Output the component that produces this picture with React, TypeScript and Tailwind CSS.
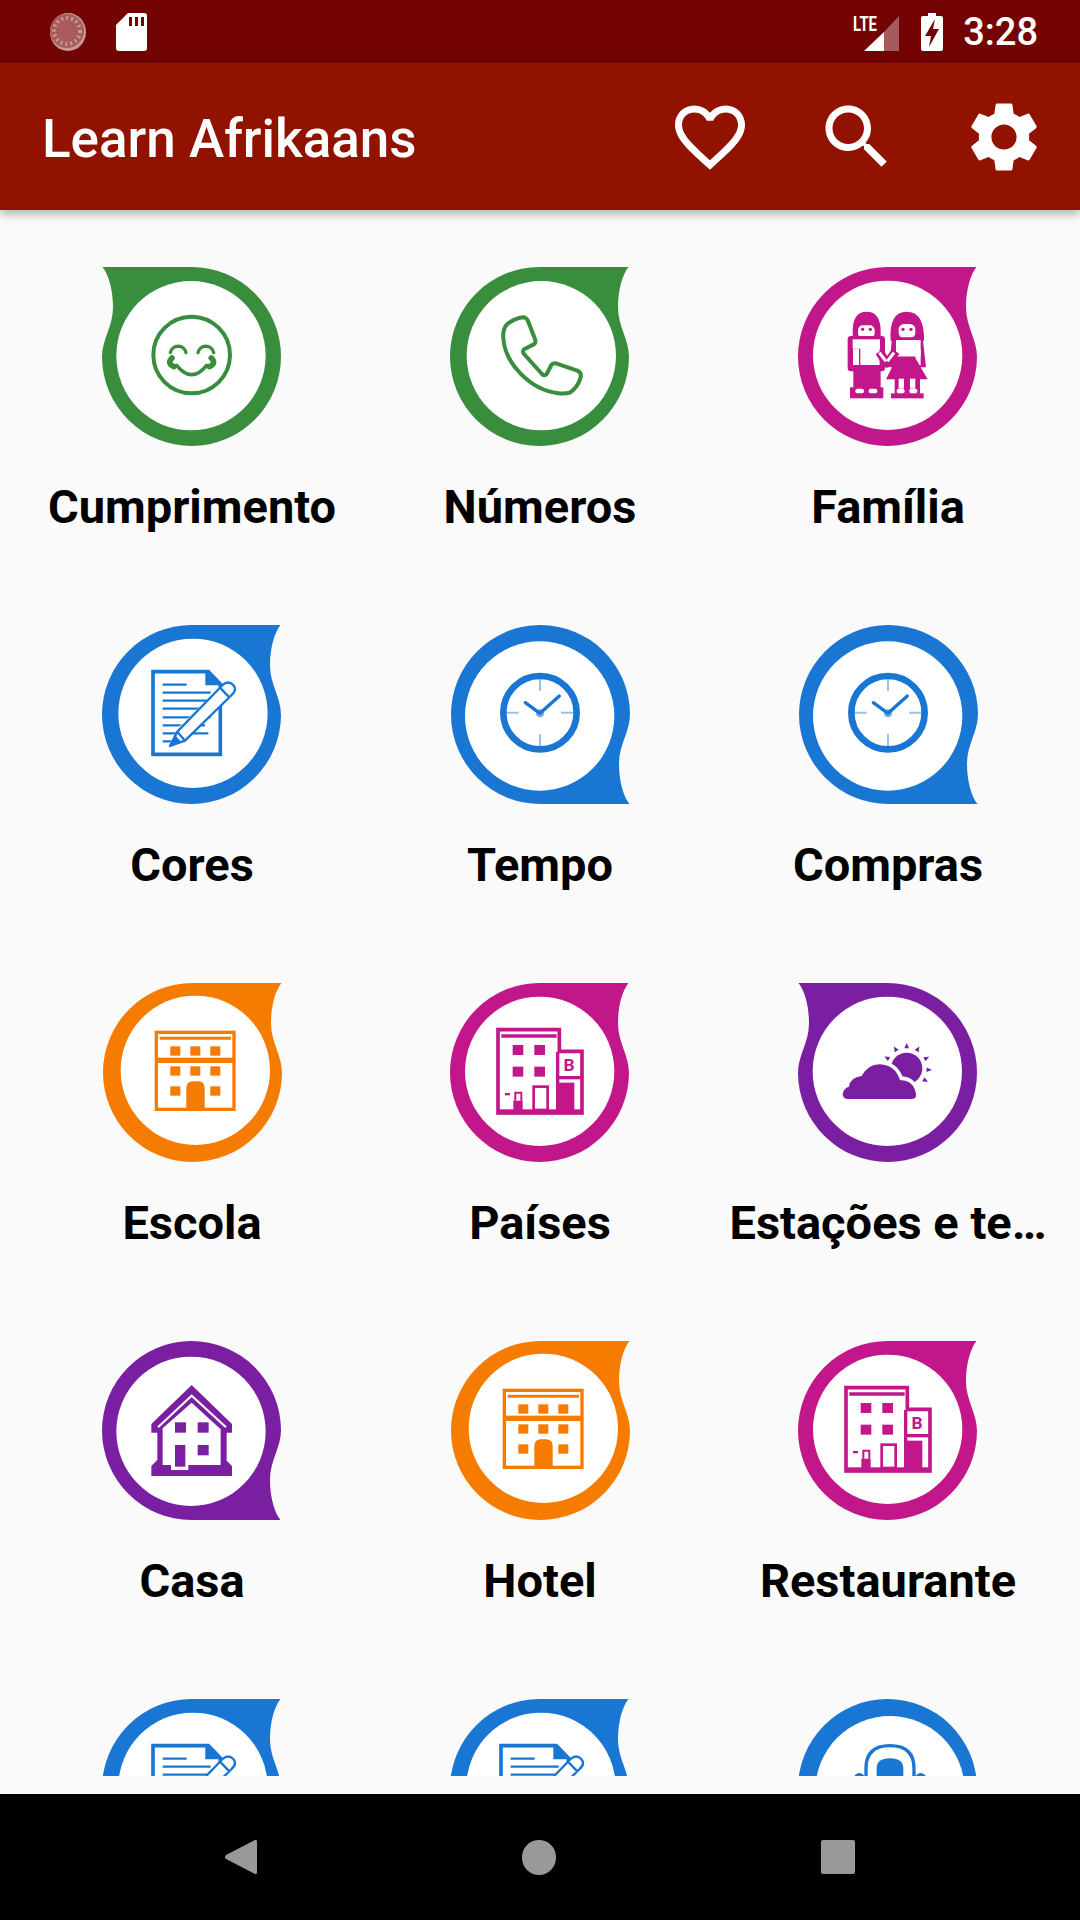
import React from 'react'

const GREEN = '#388e3c'
const BLUE = '#1976d2'
const PINK = '#c2178a'
const ORANGE = '#f57c00'
const PURPLE = '#7b1fa2'

type Corner = 'tl' | 'tr' | 'br'

interface Glyph {
  // offset of the drop's box and centre of the white disc, in 3x units
  ox: number
  oy: number
  cx: number
  cy: number
  draw: (c: string) => React.ReactNode
}

const smile: Glyph = {
  ox: 66,
  oy: 51,
  cx: 333,
  cy: 317,
  draw: c => (
    <g fill="none" stroke={c} strokeLinecap="round">
      <circle cx="335" cy="315" r="115" strokeWidth="12" />
      <path d="M271 308 A24 24 0 0 1 318 308 M354 308 A24 24 0 0 1 401 308" strokeWidth="10" />
      <path d="M290 346 Q335 402 380 346" strokeWidth="11" />
      <path d="M282 350 Q260 340 276 324 M388 350 Q410 340 394 324" strokeWidth="17" />
    </g>
  )
}

const phone: Glyph = {
  ox: 60,
  oy: 51,
  cx: 334,
  cy: 317,
  draw: c => (
    <path
      d="M232 222 Q255 205 278 202 Q290 202 295 215 L316 270 Q318 280 310 284 L282 298 Q276 304 282 312 L336 372 Q344 380 350 372 L364 345 Q368 338 378 340 L442 362 Q455 368 452 382 Q445 410 420 428 Q405 432 385 430 C300 420 225 340 220 265 Q218 235 232 222Z"
      fill="none"
      stroke={c}
      strokeWidth="12"
      strokeLinejoin="round"
    />
  )
}

const family: Glyph = {
  ox: 54,
  oy: 51,
  cx: 323,
  cy: 316,
  draw: c => (
    <g>
      {/* boy */}
      <path d="M218 250 Q216 185 260 185 Q304 185 302 250 L302 268 L218 268Z" fill={c} />
      <rect x="234" y="226" width="50" height="38" rx="14" fill="#fff" />
      <circle cx="248" cy="238" r="5" fill={c} />
      <circle cx="271" cy="238" r="5" fill={c} />
      <rect x="203" y="258" width="112" height="106" rx="10" fill={c} />
      <rect x="218" y="268" width="82" height="28" fill="#fff" />
      <rect x="219" y="296" width="18" height="50" fill="#fff" />
      <rect x="241" y="292" width="58" height="54" fill="#fff" />
      <rect x="220" y="345" width="82" height="70" fill={c} />
      <rect x="210" y="412" width="100" height="33" fill={c} />
      <rect x="226" y="416" width="26" height="14" rx="6" fill="#fff" />
      <rect x="266" y="416" width="26" height="14" rx="6" fill="#fff" />
      {/* girl */}
      <path d="M332 272 Q326 185 380 185 Q434 185 432 272Z" fill={c} />
      <rect x="356" y="222" width="50" height="42" rx="16" fill="#fff" />
      <circle cx="369" cy="238" r="5" fill={c} />
      <circle cx="393" cy="238" r="5" fill={c} />
      <path d="M336 262 H428 L438 352 H328Z" fill={c} />
      <rect x="348" y="270" width="74" height="50" fill="#fff" />
      <rect x="406" y="300" width="16" height="46" fill="#fff" />
      <path d="M352 320 H404 L443 388 H318Z" fill={c} />
      <rect x="344" y="386" width="76" height="45" fill={c} />
      <rect x="356" y="386" width="16" height="30" fill="#fff" />
      <rect x="390" y="386" width="16" height="30" fill="#fff" />
      <rect x="333" y="430" width="98" height="15" fill={c} />
      <rect x="350" y="416" width="24" height="14" rx="6" fill="#fff" />
      <rect x="388" y="416" width="24" height="14" rx="6" fill="#fff" />
      {/* hands */}
      <path d="M298 305 L320 340 L348 304" fill="none" stroke={c} strokeWidth="26" strokeLinejoin="round" />
      <path d="M298 308 L318 334 M322 334 L342 308" fill="none" stroke="#fff" strokeWidth="9" />
    </g>
  )
}

const doc: Glyph = {
  ox: 66,
  oy: 45,
  cx: 339,
  cy: 310,
  draw: c => (
    <g>
      <path d="M219 185 H385 L421 222 V433 H219Z" fill="#fff" stroke={c} strokeWidth="11" />
      <path d="M376 184 V226 H425Z" fill={c} />
      <path
        d="M248 224 H320 M248 248 H392 M248 272 H392 M248 296 H392 M248 322 H392 M248 346 H375 M248 370 H385 M248 394 H292"
        stroke={c}
        strokeWidth="7"
      />
      <path d="M262 414 L296 352 L430 222 Q445 208 460 222 Q472 238 458 254 L322 386Z" fill="#fff" />
      <path
        d="M270 408 L292 365 L428 225 Q445 210 460 225 Q472 240 455 255 L315 392Z M292 365 L315 392 M420 233 L448 262"
        fill="none"
        stroke={c}
        strokeWidth="7"
        strokeLinejoin="round"
      />
      <path d="M266 412 L288 378 L304 396Z" fill={c} />
    </g>
  )
}

const clock: Glyph = {
  ox: 65,
  oy: 47,
  cx: 331,
  cy: 320,
  draw: c => (
    <g fill="none" stroke={c}>
      <circle cx="332" cy="310" r="110" strokeWidth="20" />
      <path d="M332 205 V245 M332 375 V415 M222 310 H268 M395 310 H440" strokeWidth="6" opacity="0.45" />
      <path d="M288 280 L332 312 L390 260" strokeWidth="10" strokeLinecap="round" strokeLinejoin="round" />
      <circle cx="332" cy="312" r="12" fill={c} stroke="none" opacity="0.6" />
    </g>
  )
}

const school: Glyph = {
  ox: 68,
  oy: 40,
  cx: 345,
  cy: 302,
  draw: c => (
    <g fill={c}>
      <rect x="228" y="188" width="233" height="231" fill="none" stroke={c} strokeWidth="10" />
      <path d="M238 206 H452" stroke={c} strokeWidth="9" />
      <rect x="226" y="264" width="238" height="16" />
      {[270, 330, 390].map(x => (
        <rect key={x} x={x} y="230" width="30" height="28" />
      ))}
      {[270, 330, 390].map(x => (
        <rect key={x} x={x} y="290" width="30" height="28" />
      ))}
      <rect x="270" y="350" width="30" height="28" />
      <rect x="390" y="350" width="30" height="28" />
      <path d="M318 418 V356 Q318 335 338 335 H353 Q373 335 373 356 V418Z" />
    </g>
  )
}

const hotel: Glyph = {
  ox: 60,
  oy: 39,
  cx: 329,
  cy: 304,
  draw: c => (
    <g fill={c}>
      <path d="M204 179 H388 V244 H456 V429 H204Z" fill="#fff" stroke={c} strokeWidth="11" />
      <path d="M214 198 H380" stroke={c} strokeWidth="10" />
      <rect x="248" y="225" width="32" height="30" />
      <rect x="313" y="225" width="32" height="30" />
      <rect x="248" y="290" width="32" height="30" />
      <rect x="313" y="290" width="32" height="30" />
      <rect x="204" y="418" width="252" height="15" />
      <rect x="378" y="246" width="10" height="180" />
      <rect x="386" y="318" width="66" height="10" />
      <text
        x="417"
        y="303"
        textAnchor="middle"
        fontFamily="Roboto, sans-serif"
        fontWeight="700"
        fontSize="52"
      >
        B
      </text>
      <rect x="386" y="338" width="47" height="84" />
      <rect x="311" y="350" width="42" height="70" fill="#fff" stroke={c} strokeWidth="8" />
      <rect x="250" y="392" width="28" height="30" />
      <path d="M256 392 V368 H274 V392" fill="none" stroke={c} strokeWidth="6" />
      <rect x="225" y="369" width="15" height="7" />
    </g>
  )
}

const RAYS = [-152, -120, -90, -60, -27, 4, 33]

const CLOUD =
  'M205 387 Q188 387 188 372 Q190 355 207 350 Q210 322 245 318 Q265 282 300 283 Q345 285 360 330 Q395 330 405 360 Q415 387 395 387Z'

const weather: Glyph = {
  ox: 54,
  oy: 39,
  cx: 322,
  cy: 304,
  draw: c => (
    <g fill={c}>
      <circle cx="380" cy="295" r="47" />
      {RAYS.map(a => (
        <polygon key={a} points="436,288 436,302 452,295" transform={`rotate(${a} 380 295) translate(4 0)`} />
      ))}
      <path d={CLOUD} stroke="#fff" strokeWidth="22" />
      <path d={CLOUD} />
    </g>
  )
}

const house: Glyph = {
  ox: 66,
  oy: 33,
  cx: 333,
  cy: 304,
  draw: c => (
    <g fill={c}>
      <path d="M335 165 L456 282 V308 H440 V392 L456 408 V438 H214 V408 L232 390 V308 H214 V282Z" />
      <path d="M335 218 L422 298 V405 H325 V420 H273 V405 H248 V295Z" fill="#fff" />
      <path d="M234 292 L335 197 L438 292" fill="none" stroke="#fff" strokeWidth="6" />
      <rect x="285" y="277" width="33" height="31" />
      <rect x="353" y="277" width="33" height="31" />
      <rect x="353" y="345" width="33" height="31" />
      <rect x="285" y="345" width="31" height="65" />
    </g>
  )
}

const bell: Glyph = {
  ox: 54,
  oy: 57,
  cx: 330,
  cy: 332,
  draw: c => (
    <g fill={c}>
      <circle cx="238" cy="296" r="17" />
      <circle cx="422" cy="296" r="17" />
      <path d="M253 340 V265 Q253 192 330 192 Q407 192 407 265 V340Z" />
      <path d="M263 340 V265 Q263 202 330 202 Q397 202 397 265 V340Z" fill="#fff" />
      <path d="M290 340 V265 Q290 235 330 235 Q370 235 370 265 V340Z" />
    </g>
  )
}

const CORNERS: Record<Corner, string> = {
  tr: '',
  tl: 'translate(179 0) scale(-1 1)',
  br: 'translate(0 179) scale(1 -1)'
}

function Drop({ color, corner, glyph, nudge }: { color: string; corner: Corner; glyph: Glyph; nudge?: boolean }) {
  return (
    <svg width="180" height="180" viewBox="0 0 180 180" className={nudge ? 'block translate-x-[1px]' : 'block'}>
      <path
        d="M89.5 0 H178.5 C172 8 168 24 168 40 C168 60 179 72 179 90 A89.5 89.5 0 1 1 89.5 0Z"
        fill={color}
        transform={CORNERS[corner]}
      />
      <g transform={`scale(0.3333) translate(${-glyph.ox} ${-glyph.oy})`}>
        <circle cx={glyph.cx} cy={glyph.cy} r="224" fill="#fff" />
        {glyph.draw(color)}
      </g>
    </svg>
  )
}

const ITEMS: { label?: string; color: string; corner: Corner; glyph: Glyph; nudge?: boolean }[] = [
  { label: 'Cumprimento', color: GREEN, corner: 'tl', glyph: smile },
  { label: 'Números', color: GREEN, corner: 'tr', glyph: phone },
  { label: 'Família', color: PINK, corner: 'tr', glyph: family },
  { label: 'Cores', color: BLUE, corner: 'tr', glyph: doc },
  { label: 'Tempo', color: BLUE, corner: 'br', glyph: clock, nudge: true },
  { label: 'Compras', color: BLUE, corner: 'br', glyph: clock, nudge: true },
  { label: 'Escola', color: ORANGE, corner: 'tr', glyph: school, nudge: true },
  { label: 'Países', color: PINK, corner: 'tr', glyph: hotel },
  { label: 'Estações e te…', color: PURPLE, corner: 'tl', glyph: weather },
  { label: 'Casa', color: PURPLE, corner: 'br', glyph: house },
  { label: 'Hotel', color: ORANGE, corner: 'tr', glyph: school, nudge: true },
  { label: 'Restaurante', color: PINK, corner: 'tr', glyph: hotel },
  // última linha cortada pela barra, o rótulo não aparece
  { color: BLUE, corner: 'tr', glyph: doc },
  { color: BLUE, corner: 'tr', glyph: doc },
  { color: BLUE, corner: 'br', glyph: bell }
]

function MaterialIcon({ d }: { d: string }) {
  return (
    <button className="flex h-[147px] w-[147px] items-center justify-center">
      <svg width="84" height="84" viewBox="0 0 24 24" fill="#fff">
        <path d={d} />
      </svg>
    </button>
  )
}

function StatusBar() {
  return (
    <div className="flex h-[63px] items-center justify-between bg-[#740404] pl-[50px] pr-[42px] text-white">
      <div className="flex items-center gap-[30px]">
        <svg width="36" height="38" viewBox="0 0 36 38">
          <ellipse cx="18" cy="19" rx="18" ry="19" fill="#fff" opacity="0.6" />
          <circle cx="17" cy="18" r="17" fill="#a85a5c" />
          <circle cx="17" cy="18" r="13" fill="none" stroke="#c49a9a" strokeWidth="4" strokeDasharray="2 3" />
        </svg>
        <svg width="31" height="38" viewBox="0 0 31 38">
          <path d="M12 0 H28 Q31 0 31 3 V35 Q31 38 28 38 H3 Q0 38 0 35 V12Z" fill="#fff" />
          <path d="M13 4 H16 V13 H13Z M19 4 H22 V13 H19Z M25 4 H28 V13 H25Z" fill="#740404" />
        </svg>
      </div>
      <div className="flex items-center">
        <svg width="46" height="38" viewBox="0 0 46 38" className="mr-[22px]">
          <path d="M46 3 V38 H31 V19Z" fill="#fff" opacity="0.35" />
          <path d="M31 19 V38 H11Z" fill="#fff" />
          <text
            x="0"
            y="18"
            fontFamily="Roboto, sans-serif"
            fontWeight="700"
            fontSize="21"
            fill="#fff"
            textLength="24"
            lengthAdjust="spacingAndGlyphs"
          >
            LTE
          </text>
        </svg>
        <svg width="22" height="38" viewBox="0 0 22 38" className="mr-[20px]">
          <path d="M7 0 H15 V3 H20 Q22 3 22 5 V36 Q22 38 20 38 H2 Q0 38 0 36 V5 Q0 3 2 3 H7Z" fill="#fff" />
          <path d="M14 6 L4 23 H10 L8 34 L18 16 H12Z" fill="#740404" />
        </svg>
        <span className="text-[38px] font-medium leading-none">3:28</span>
      </div>
    </div>
  )
}

function AppBar() {
  return (
    <div className="relative z-10 flex h-[147px] items-center justify-between bg-[#921200] pl-[42px] pr-[3px] shadow-[0_4px_10px_rgba(0,0,0,0.3)]">
      <span className="pt-[5px] text-[53px] font-medium leading-none text-white">Learn Afrikaans</span>
      <div className="flex">
        <MaterialIcon d="M16.5 3c-1.74 0-3.41.81-4.5 2.09C10.91 3.81 9.24 3 7.5 3 4.42 3 2 5.42 2 8.5c0 3.78 3.4 6.86 8.55 11.54L12 21.35l1.45-1.32C18.6 15.36 22 12.28 22 8.5 22 5.42 19.58 3 16.5 3zm-4.4 15.55l-.1.1-.1-.1C7.14 14.24 4 11.39 4 8.5 4 6.5 5.5 5 7.5 5c1.54 0 3.04.99 3.57 2.36h1.87C13.46 5.99 14.96 5 16.5 5c2 0 3.5 1.5 3.5 3.5 0 2.89-3.14 5.74-7.9 10.05z" />
        <MaterialIcon d="M15.5 14h-.79l-.28-.27C15.41 12.59 16 11.11 16 9.5 16 5.91 13.09 3 9.5 3S3 5.91 3 9.5 5.91 16 9.5 16c1.61 0 3.09-.59 4.23-1.57l.27.28v.79l5 4.99L20.49 19l-4.99-5zm-6 0C7.01 14 5 11.99 5 9.5S7.01 5 9.5 5 14 7.01 14 9.5 11.99 14 9.5 14z" />
        <MaterialIcon d="M19.14 12.94c.04-.3.06-.61.06-.94 0-.32-.02-.64-.07-.94l2.03-1.58c.18-.14.23-.41.12-.61l-1.92-3.32c-.12-.22-.37-.29-.59-.22l-2.39.96c-.5-.38-1.03-.7-1.62-.94l-.36-2.54c-.04-.24-.24-.41-.48-.41h-3.84c-.24 0-.43.17-.47.41l-.36 2.54c-.59.24-1.13.57-1.62.94l-2.39-.96c-.22-.08-.47 0-.59.22L2.74 8.87c-.12.21-.08.47.12.61l2.03 1.58c-.05.3-.09.63-.09.94s.02.64.07.94l-2.03 1.58c-.18.14-.23.41-.12.61l1.92 3.32c.12.22.37.29.59.22l2.39-.96c.5.38 1.03.7 1.62.94l.36 2.54c.05.24.24.41.48.41h3.84c.24 0 .44-.17.47-.41l.36-2.54c.59-.24 1.13-.56 1.62-.94l2.39.96c.22.08.47 0 .59-.22l1.92-3.32c.12-.22.07-.47-.12-.61l-2.01-1.58zM12 15.6c-1.98 0-3.6-1.62-3.6-3.6s1.62-3.6 3.6-3.6 3.6 1.62 3.6 3.6-1.62 3.6-3.6 3.6z" />
      </div>
    </div>
  )
}

export default function App() {
  return (
    <div className="flex h-[1920px] w-[1080px] flex-col overflow-hidden bg-[#fafafa] [font-family:Roboto,sans-serif]">
      <StatusBar />
      <AppBar />

      {/* Grade de categorias */}
      <div className="grid h-[1566px] grid-cols-3 auto-rows-[358px] overflow-hidden px-[18px]">
        {ITEMS.map((item, i) => (
          <div key={i} className="flex min-w-0 flex-col items-center pt-[57px]">
            <Drop color={item.color} corner={item.corner} glyph={item.glyph} nudge={item.nudge} />
            {item.label && (
              <div className="mt-[32px] w-full truncate px-[6px] text-center text-[47px] font-bold leading-[56px] text-black">
                {item.label}
              </div>
            )}
          </div>
        ))}
      </div>

      <div className="h-[18px]" />

      {/* Barra de navegação */}
      <div className="flex h-[126px] items-center justify-center gap-[265px] bg-black">
        <svg width="32" height="36" viewBox="0 0 32 36">
          <path d="M30 1 Q32 0 32 3 V33 Q32 36 30 35 L1 20 Q-1 18 1 16Z" fill="#999" />
        </svg>
        <div className="h-[35px] w-[34px] rounded-full bg-[#999]" />
        <div className="h-[34px] w-[34px] rounded-[2px] bg-[#999]" />
      </div>
    </div>
  )
}
